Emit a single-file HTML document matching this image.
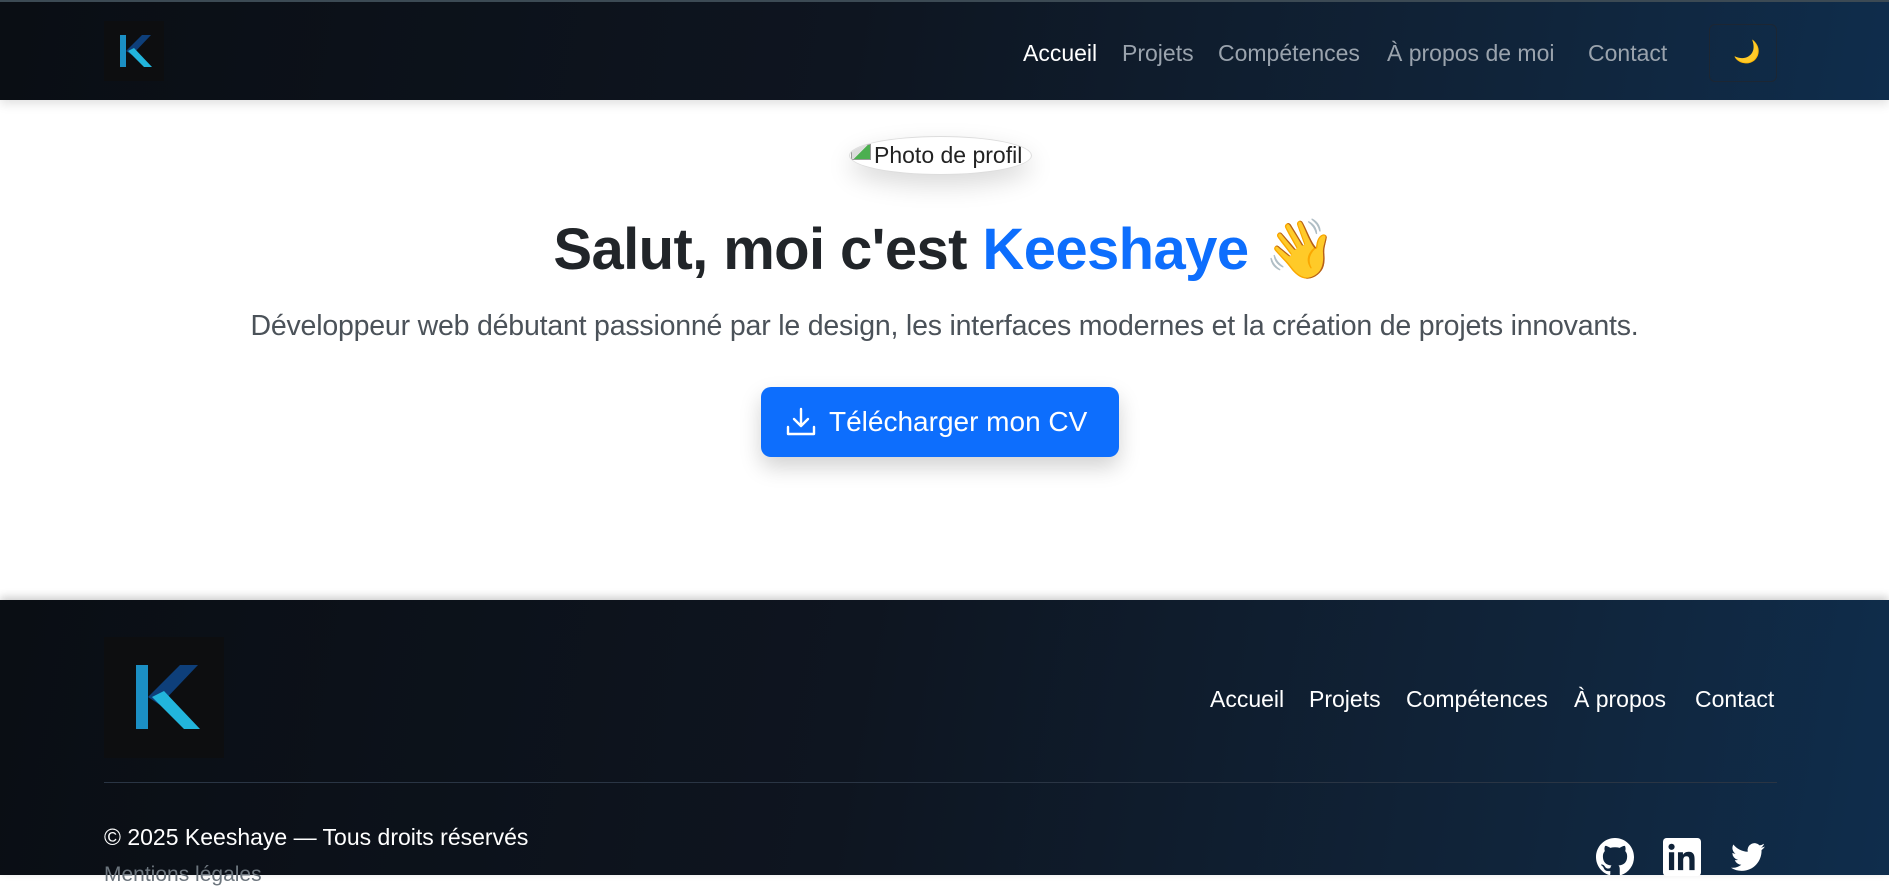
<!DOCTYPE html>
<html><head><meta charset="utf-8"><style>
*{margin:0;padding:0;box-sizing:border-box}
html,body{width:1889px;height:875px;overflow:hidden;background:#fff;font-family:"Liberation Sans",sans-serif}
.nav{position:absolute;left:0;top:0;width:1889px;height:100px;background:linear-gradient(100deg,#0a0e14 0%,#0e1520 45%,#10243a 80%,#0f2d4c 100%);border-top:2px solid #3c4a54;box-shadow:0 4px 10px rgba(0,0,0,.12);z-index:2}
.logo{position:absolute;background:#0d0e10;overflow:hidden}
.nav a{position:absolute;top:38px;font-size:23px;color:#9aa3ad;text-decoration:none;white-space:nowrap}
.moon{position:absolute;left:1709px;top:22px;width:68px;height:58px;border:1px solid #1c2633;border-radius:6px;background:transparent}
.photo{position:absolute;left:849px;top:136px;width:183px;height:39px;border-radius:50%;border:1px solid #ddd;box-shadow:0 10px 25px rgba(0,0,0,.15);font-size:23px;color:#222;overflow:hidden;white-space:nowrap;line-height:37px;padding-left:24px;background:#fff}
.photo i{position:absolute;left:1px;top:7px;width:20px;height:16px;background:linear-gradient(135deg,#ddd 50%,#4caf50 50%);border:1px solid #999}
h1{position:absolute;left:0;width:1889px;top:216px;text-align:center;font-size:58px;font-weight:bold;color:#212529;letter-spacing:-0.6px}
h1 span{color:#0d6efd}
.lead{position:absolute;left:0;width:1889px;top:310px;text-align:center;font-size:28.5px;color:#4b5259;letter-spacing:-0.2px}
.btn{position:absolute;left:761px;top:387px;width:358px;height:70px;background:#0d6efd;border-radius:10px;box-shadow:0 10px 22px rgba(0,0,0,.18);color:#fff;font-size:28px;line-height:70px;padding-left:68px}
.btn svg{position:absolute;left:24px;top:20px}
.foot{position:absolute;left:0;top:600px;width:1889px;height:275px;background:linear-gradient(100deg,#0a0e14 0%,#0e1520 45%,#10243a 80%,#0f2d4c 100%);box-shadow:0 -3px 8px rgba(0,0,0,.2)}
.foot a{position:absolute;top:86px;font-size:23px;color:#fff;white-space:nowrap}
.hr{position:absolute;left:104px;top:182px;width:1673px;height:1px;background:#2a3544}
.copy{position:absolute;left:104px;top:224px;font-size:23px;color:#fff;white-space:nowrap}
.ment{position:absolute;left:104px;top:263px;font-size:21px;color:#6c757d}
</style></head><body>
<div class="nav">
 <div class="logo" style="left:104px;top:19px;width:60px;height:60px">
  <svg width="60" height="60" viewBox="0 0 60 60"><polygon points="16,14 22,14 22,46 16,46" fill="#1b8fc4"/><polygon points="22,30 38,14 47,14 28,34" fill="#0e3f7a"/><polygon points="24,30 30,27 48,46 40,46" fill="#22b5dc"/></svg>
 </div>
 <a style="left:1023px;color:#fff">Accueil</a>
 <a style="left:1122px">Projets</a>
 <a style="left:1218px">Compétences</a>
 <a style="left:1387px">À propos de moi</a>
 <a style="left:1588px">Contact</a>
 <div class="moon"><span style="position:absolute;left:23px;top:14px;font-size:22px;color:#f4b04a">🌙</span></div>
</div>
<div class="photo"><i></i>Photo de profil</div>
<h1>Salut, moi c'est <span>Keeshaye</span> 👋</h1>
<div class="lead">Développeur web débutant passionné par le design, les interfaces modernes et la création de projets innovants.</div>
<div class="btn"><svg width="32" height="30" viewBox="0 0 32 30" fill="none" stroke="#fff" stroke-width="2.4" stroke-linecap="round" stroke-linejoin="round"><path d="M16 2v17M9 12l7 7 7-7M3 20v7h26v-7"/></svg>Télécharger mon CV</div>
<div class="foot">
 <div class="logo" style="left:104px;top:37px;width:120px;height:121px">
  <svg width="120" height="120" viewBox="0 0 60 60"><polygon points="16,14 22,14 22,46 16,46" fill="#1b8fc4"/><polygon points="22,30 38,14 47,14 28,34" fill="#0e3f7a"/><polygon points="24,30 30,27 48,46 40,46" fill="#22b5dc"/></svg>
 </div>
 <a style="left:1210px">Accueil</a>
 <a style="left:1309px">Projets</a>
 <a style="left:1406px">Compétences</a>
 <a style="left:1574px">À propos</a>
 <a style="left:1695px">Contact</a>
 <div class="hr"></div>
 <div class="copy">© 2025 Keeshaye — Tous droits réservés</div>
 <div class="ment">Mentions légales</div>
 <svg style="position:absolute;left:1596px;top:238px" width="38" height="38" viewBox="0 0 16 16" fill="#fff"><path d="M8 0C3.58 0 0 3.58 0 8c0 3.54 2.290 6.53 5.47 7.59.4.07.55-.17.55-.38v-1.33c-2.23.48-2.7-1.07-2.7-1.070-.36-.92-.89-1.17-.89-1.17-.73-.5.05-.49.05-.49.8.06 1.23.83 1.23.83.71 1.22 1.87.87 2.33.66.07-.52.28-.87.51-1.07-1.78-.2-3.640-.89-3.64-3.95 0-.87.31-1.59.82-2.15-.08-.2-.36-1.02.08-2.12 0 0 .67-.21 2.2.82a7.6 7.6 0 0 1 4 0c1.53-1.04 2.2-.82 2.2-.82.44 1.1.16 1.92.08 2.12.51.56.82 1.27.82 2.15 0 3.07-1.87 3.75-3.65 3.95.29.25.54.73.54 1.48v2.2c0 .21.15.46.55.38A8.01 8.01 0 0 0 16 8c0-4.42-3.58-8-8-8z"/></svg>
 <svg style="position:absolute;left:1663px;top:238px" width="38" height="38" viewBox="0 0 16 16"><rect width="16" height="16" rx="1.5" fill="#fff"/><rect x="2.5" y="6" width="2.2" height="7.5" fill="#0f2238"/><circle cx="3.6" cy="3.7" r="1.3" fill="#0f2238"/><path d="M6.3 6h2.1v1.1c.4-.7 1.2-1.3 2.4-1.3 2 0 2.5 1.3 2.5 3.1v4.6h-2.2V9.4c0-1-.2-1.7-1.2-1.7s-1.4.7-1.4 1.7v4.1H6.3z" fill="#0f2238"/></svg>
 <svg style="position:absolute;left:1729px;top:240px" width="38" height="34" viewBox="0 0 16 16" fill="#fff"><path d="M5.03 14.5c6.04 0 9.34-5 9.34-9.34l-.01-.42A6.7 6.7 0 0 0 16 3.04a6.5 6.5 0 0 1-1.89.52 3.3 3.3 0 0 0 1.45-1.82 6.6 6.6 0 0 1-2.09.8 3.28 3.28 0 0 0-5.59 2.99A9.32 9.32 0 0 1 1.11 2.1a3.28 3.28 0 0 0 1.02 4.38 3.3 3.3 0 0 1-1.49-.41v.04a3.28 3.28 0 0 0 2.63 3.22 3.3 3.3 0 0 1-1.48.06 3.29 3.29 0 0 0 3.070 2.28A6.59 6.59 0 0 1 0 13.03a9.3 9.3 0 0 0 5.03 1.47"/></svg>
</div>
</body></html>
